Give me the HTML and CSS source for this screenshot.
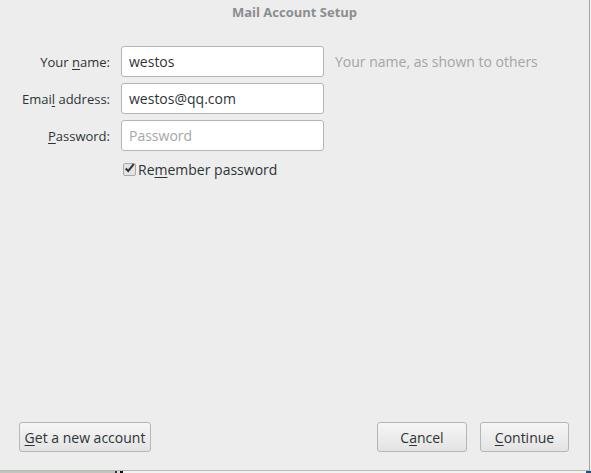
FILE: index.html
```html
<!DOCTYPE html>
<html lang="en">
<head>
    <meta charset="UTF-8">
    <title>Mail Account Setup</title>
    <link rel="stylesheet" href="styles.css">
</head>
<body>
    <div class="window">
        <h1 class="title">Mail Account Setup</h1>

        <form class="form">
            <label class="label" for="name">Your <u>n</u>ame:</label>
            <input class="field" id="name" type="text" value="westos">
            <span class="hint">Your name, as shown to others</span>

            <label class="label" for="email">Emai<u>l</u> address:</label>
            <input class="field" id="email" type="text" value="westos@qq.com">
            <span></span>

            <label class="label" for="pass"><u>P</u>assword:</label>
            <input class="field" id="pass" type="password" placeholder="Password">
            <span></span>

            <span></span>
            <label class="remember">
                <span class="check">
                    <svg width="13" height="12" viewBox="0 0 13 12">
                        <path d="M2 6.5 L5 9.5 L11.5 1.5" fill="none" stroke="#2e3436" stroke-width="2.4"/>
                    </svg>
                </span>
                <span class="remember-text">Re<u>m</u>ember password</span>
            </label>
        </form>

        <div class="spacer"></div>

        <div class="actions">
            <button class="btn new-account" type="button"><u>G</u>et a new account</button>
            <div class="right-buttons">
                <button class="btn cancel" type="button">C<u>a</u>ncel</button>
                <button class="btn continue" type="button"><u>C</u>ontinue</button>
            </div>
        </div>
    </div>
    <div class="taskbar">
        <span class="tb-left"></span>
        <span class="tb-icons"></span>
        <span class="tb-mid"></span>
        <span class="tb-blue"></span>
    </div>
</body>
</html>
```

FILE: styles.css
```css
html, body {
    margin: 0;
    padding: 0;
}

body {
    width: 591px;
    height: 473px;
    overflow: hidden;
    background-color: #f2f2f2;
    font-family: "Open Sans", "DejaVu Sans", sans-serif;
    font-size: 13px;
    color: #2e3436;
}

u {
    text-decoration: underline;
    text-underline-offset: 2px;
}

.window {
    width: 589px;
    height: 470px;
    border-right: 1px solid #a4a4a4;
    border-bottom: 1px solid #b8b8b8;
    background-color: #ededed;
    display: flex;
    flex-direction: column;
}

.title {
    margin: 0;
    padding-top: 3px;
    height: 19px;
    text-align: center;
    font-size: 13px;
    font-weight: bold;
    color: #8b8e8f;
}

.form {
    display: grid;
    grid-template-columns: 110px 203px auto;
    column-gap: 11px;
    row-gap: 6px;
    align-items: center;
    margin-top: 24px;
}

.label {
    text-align: right;
    color: #2e3436;
}

.field {
    box-sizing: border-box;
    width: 203px;
    height: 31px;
    padding: 0 7px;
    border: 1px solid #b5b5b2;
    border-radius: 3px;
    background-color: #ffffff;
    font-family: inherit;
    font-size: 14px;
    color: #2e3436;
    outline: none;
}

.field::placeholder {
    color: #a5a7a7;
}

.hint {
    color: #a3a5a5;
    font-size: 14px;
}

.remember {
    grid-column: 2 / 4;
    display: flex;
    align-items: center;
    gap: 2px;
    margin-top: 3px;
    padding-left: 2px;
    font-size: 14px;
}

.check {
    box-sizing: border-box;
    width: 13px;
    height: 13px;
    border: 1px solid #a8a8a8;
    border-radius: 2px;
    background-color: #e4e4e4;
    display: flex;
    align-items: flex-end;
    justify-content: center;
}

.check svg {
    margin-bottom: 1px;
}

.spacer {
    flex: 1;
}

.actions {
    display: flex;
    justify-content: space-between;
    padding: 0 20px 18px 19px;
}

.right-buttons {
    display: flex;
    gap: 13px;
}

.btn {
    box-sizing: border-box;
    height: 30px;
    padding: 0 4px;
    border: 1px solid #b6b6b6;
    border-radius: 3px;
    background: linear-gradient(#f6f6f6, #e3e3e3);
    font-family: inherit;
    font-size: 14px;
    color: #2e3436;
}

.new-account {
    width: 132px;
}

.cancel {
    width: 90px;
}

.continue {
    width: 89px;
}

.taskbar {
    display: flex;
    height: 2px;
}

.tb-left {
    width: 111px;
    background-color: #c2c6be;
}

.tb-icons {
    width: 14px;
    background: linear-gradient(90deg, #c2c6be 0 4px, #333 4px 6px, #ddd 6px 9px, #111 9px 12px, #f0f0f0 12px);
}

.tb-mid {
    flex: 1;
    background-color: #f2f2f2;
}

.tb-blue {
    width: 5px;
    background-color: #1d4f8c;
}
```
